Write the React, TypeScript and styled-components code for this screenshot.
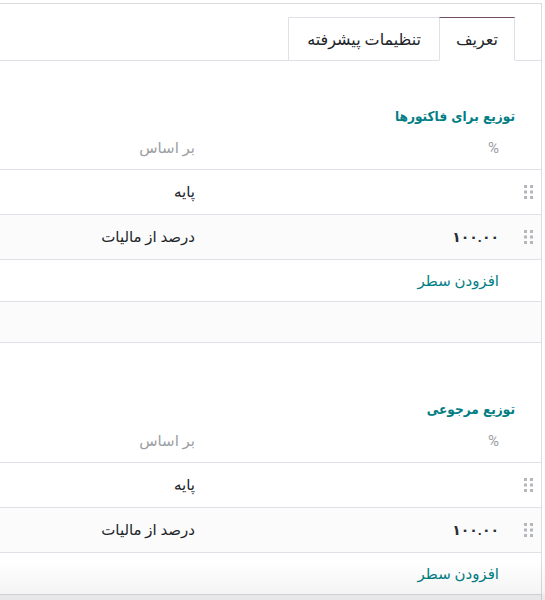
import React from 'react';
import styled, { createGlobalStyle } from 'styled-components';

const GlobalStyle = createGlobalStyle`
  body {
    margin: 0;
    background: #ffffff;
    font-family: Roboto, "DejaVu Sans", sans-serif;
    font-size: 15px;
    color: #212529;
  }
`;

type Line = { percent: string; base: string };

const sections: { title: string; lines: Line[] }[] = [
  {
    title: 'توزیع برای فاکتورها',
    lines: [
      { percent: '', base: 'پایه' },
      { percent: '۱۰۰.۰۰', base: 'درصد از مالیات' },
    ],
  },
  {
    title: 'توزیع مرجوعی',
    lines: [
      { percent: '', base: 'پایه' },
      { percent: '۱۰۰.۰۰', base: 'درصد از مالیات' },
    ],
  },
];

function Handle() {
  return (
    <svg width="9" height="14" viewBox="0 0 9 14">
      {[0, 5.5, 11].map((y) =>
        [0, 6].map((x) => <rect key={`${x}-${y}`} x={x} y={y} width="3" height="3" fill="#b4b8bd" />)
      )}
    </svg>
  );
}

export default function App() {
  return (
    <Page>
      <GlobalStyle />
      <Sheet>
        <TabBar>
          <Tab $active>تعریف</Tab>
          <Tab>تنظیمات پیشرفته</Tab>
        </TabBar>

        {sections.map((section, i) => (
          <Section key={section.title} $first={i === 0}>
            <Heading>{section.title}</Heading>
            <Table>
              <HeadRow>
                <Cell />
                <Cell>%</Cell>
                <Cell>بر اساس</Cell>
              </HeadRow>
              {section.lines.map((line, j) => (
                <Row key={j}>
                  <HandleCell>
                    <Handle />
                  </HandleCell>
                  <Amount>{line.percent}</Amount>
                  <Cell>{line.base}</Cell>
                </Row>
              ))}
              <AddRow>
                <Cell />
                <AddLink>افزودن سطر</AddLink>
                <Cell />
              </AddRow>
              <EmptyRow />
            </Table>
          </Section>
        ))}
      </Sheet>
      <BottomShade />
    </Page>
  );
}

const Page = styled.div`
  padding-top: 3px;
  height: 597px;
  overflow: hidden;
`;

const Sheet = styled.div`
  direction: rtl;
  width: 541px;
  border-top: 1px solid #dadce0;
  border-right: 1px solid #dadce0;
  background: #fff;
`;

const TabBar = styled.div`
  display: flex;
  margin-top: 13px;
  padding-right: 26px;
  border-bottom: 1px solid #dee2e6;
`;

const Tab = styled.div<{ $active?: boolean }>`
  display: flex;
  align-items: center;
  height: 42px;
  padding: 0 ${(p) => (p.$active ? '16px' : '18px')};
  margin-bottom: -1px;
  background: #fff;
  color: #212529;
  font-size: 16px;
  border-top: 1px solid ${(p) => (p.$active ? '#714b67' : '#dee2e6')};
  border-left: 1px solid #dee2e6;
  border-right: ${(p) => (p.$active ? '1px solid #dee2e6' : 'none')};
  border-bottom: 1px solid ${(p) => (p.$active ? '#fff' : '#dee2e6')};
`;

const Section = styled.div<{ $first?: boolean }>`
  margin-top: ${(p) => (p.$first ? '44px' : '55px')};
`;

const Heading = styled.div`
  padding-right: 26px;
  height: 22px;
  line-height: 22px;
  color: #017e84;
  font-family: "DejaVu Sans Condensed", "DejaVu Sans", sans-serif;
  font-weight: bold;
  font-size: 13.5px;
`;

const Table = styled.div`
  display: flex;
  flex-direction: column;
`;

const BaseRow = styled.div`
  display: grid;
  grid-template-columns: 30px 304px 1fr;
  align-items: center;
  border-bottom: 1px solid #dee2e6;

  &:nth-child(odd) {
    background: #fbfbfb;
  }
`;

const HeadRow = styled(BaseRow)`
  height: 42px;
  color: #9b9ea3;
  background: #fff !important;
`;

const Row = styled(BaseRow)`
  height: 44px;
`;

const AddRow = styled(BaseRow)`
  height: 41px;
`;

const EmptyRow = styled(BaseRow)`
  height: 40px;
`;

const Cell = styled.div`
  padding: 0 12px;
  white-space: nowrap;
`;

const Amount = styled(Cell)`
  font-size: 14px;
  font-weight: bold;
  color: #2a2e33;
`;

const HandleCell = styled.div`
  display: flex;
  justify-content: center;
  padding-left: 4px;
`;

const AddLink = styled(Cell)`
  color: #017e84;
`;

const BottomShade = styled.div`
  position: fixed;
  left: 0;
  right: 0;
  bottom: 0;
  height: 40px;
  pointer-events: none;
  background: linear-gradient(to bottom, rgba(0, 0, 0, 0) 0%, rgba(0, 0, 0, 0.045) 84%, rgba(0, 0, 0, 0.08) 85%, rgba(0, 0, 0, 0.08) 100%);
`;
